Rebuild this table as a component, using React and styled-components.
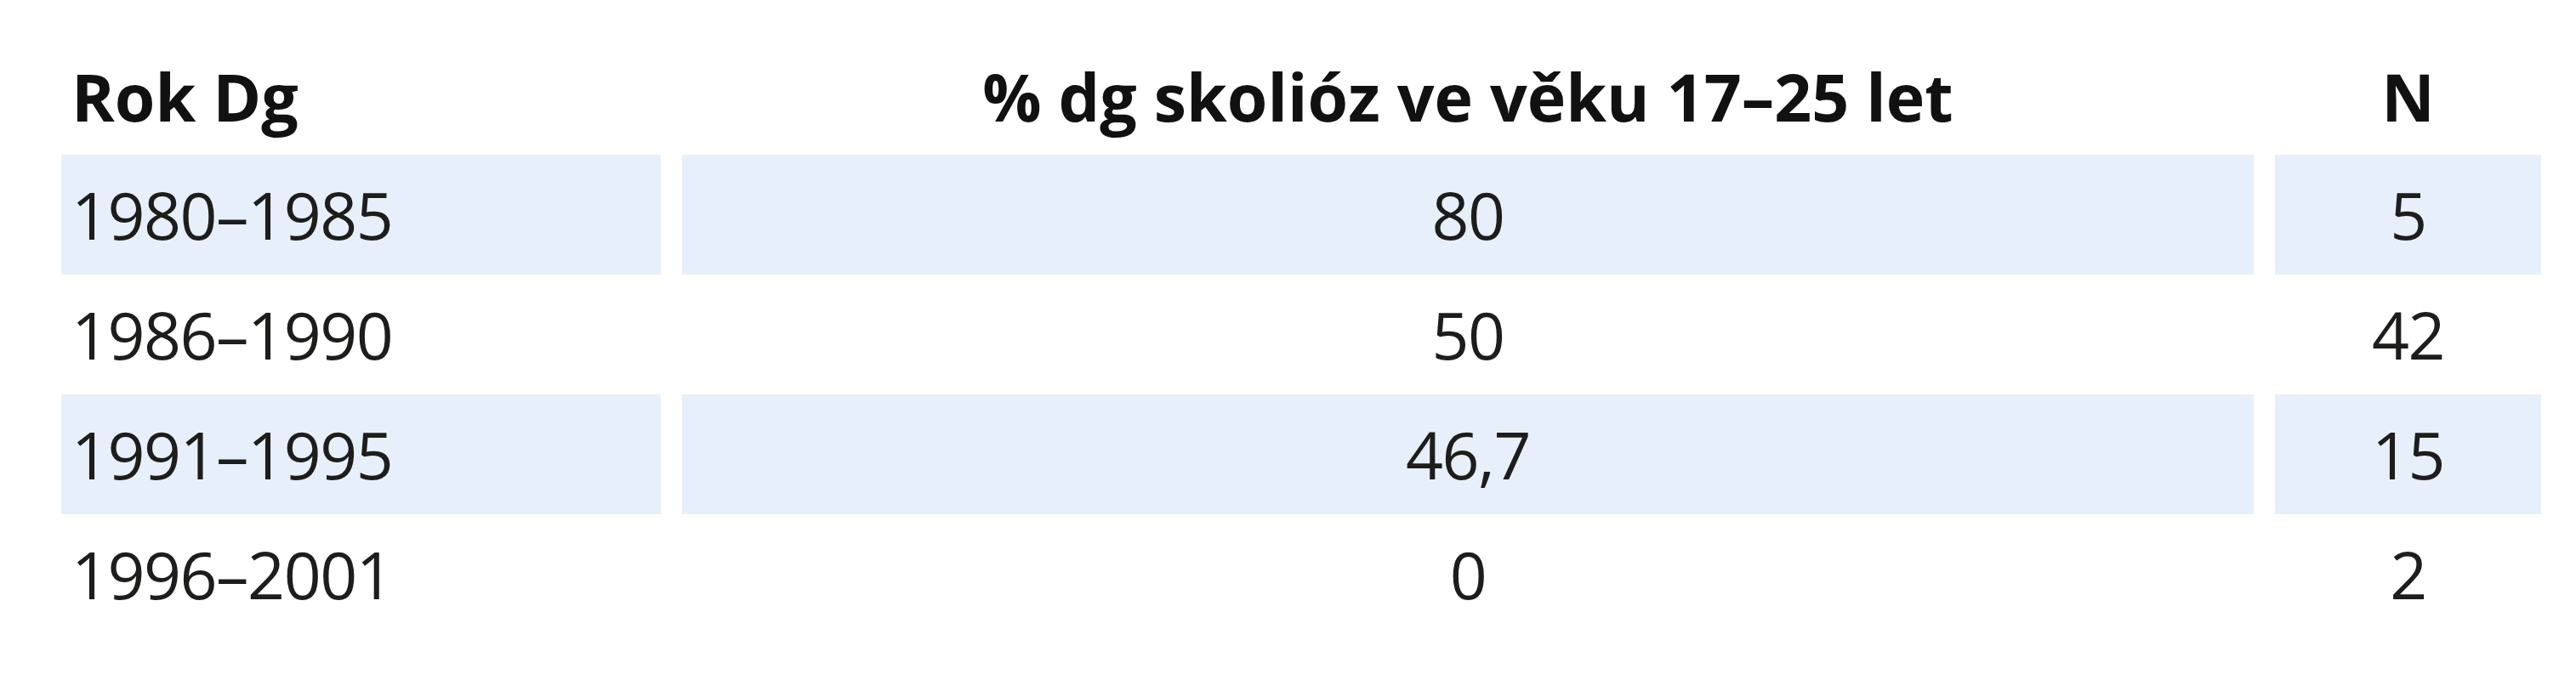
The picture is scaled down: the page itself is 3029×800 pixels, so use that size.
import React from "react";
import styled, { createGlobalStyle } from "styled-components";

const rows = [
  { year: "1980–1985", pct: "80", n: "5" },
  { year: "1986–1990", pct: "50", n: "42" },
  { year: "1991–1995", pct: "46,7", n: "15" },
  { year: "1996–2001", pct: "0", n: "2" },
];

const GlobalStyle = createGlobalStyle`
  html, body {
    margin: 0;
    padding: 0;
    background: #ffffff;
  }
  body {
    font-family: "Open Sans", "Noto Sans", sans-serif;
    color: #1d1d1b;
  }
`;

const Page = styled.div`
  width: 3029px;
  height: 800px;
  box-sizing: border-box;
  padding: 41px 0 0 72px;
  background: #ffffff;
`;

const Table = styled.div`
  display: grid;
  grid-template-columns: 705px 1848px 313px;
  grid-auto-rows: 141px;
  column-gap: 25px;
`;

const Cell = styled.div`
  display: flex;
  align-items: center;
  justify-content: ${(p) => (p.$align === "left" ? "flex-start" : "center")};
  padding-left: ${(p) => (p.$align === "left" ? "12px" : "0")};
  background: ${(p) => (p.$shaded ? "#e7f0fa" : "transparent")};
  font-size: 77px;
  line-height: 1;
  font-weight: 400;
  letter-spacing: -1.5px;
  white-space: nowrap;
`;

const HeadCell = styled(Cell)`
  font-weight: 700;
  font-size: 77px;
  letter-spacing: 0;
  color: #111111;
  padding-top: 4px;
`;

export default function App() {
  return (
    <>
      <GlobalStyle />
      <Page>
        <Table>
          <HeadCell $align="left">Rok Dg</HeadCell>
          <HeadCell>% dg skolióz ve věku 17–25 let</HeadCell>
          <HeadCell>N</HeadCell>
          {rows.map((r, i) => (
            <React.Fragment key={r.year}>
              <Cell $align="left" $shaded={i % 2 === 0}>
                {r.year}
              </Cell>
              <Cell $shaded={i % 2 === 0}>{r.pct}</Cell>
              <Cell $shaded={i % 2 === 0}>{r.n}</Cell>
            </React.Fragment>
          ))}
        </Table>
      </Page>
    </>
  );
}
